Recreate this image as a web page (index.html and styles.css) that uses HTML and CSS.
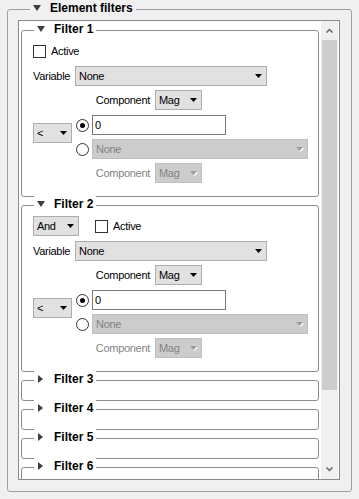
FILE: index.html
```html
<!DOCTYPE html>
<html lang="en">
<head>
  <meta charset="UTF-8">
  <meta name="viewport" content="width=device-width, initial-scale=1.0">
  <title>Element filters</title>
  <link rel="stylesheet" href="styles.css">
</head>
<body>
  <div class="outer">
    <div class="title"><svg width="8" height="6"><path d="M0 0h8L4 6z"/></svg>Element filters</div>
    <div class="scroll">
      <div class="scroll-content">

        <div class="filter">
          <div class="title"><svg width="8" height="6"><path d="M0 0h8L4 6z"/></svg>Filter 1</div>
          <div class="filter-body">
            <div class="row"><label class="check"><span class="box"></span>Active</label></div>
            <div class="row var-row"><span class="lbl">Variable</span><div class="combo w-var"><span>None</span><svg class="arr" width="8" height="5"><path d="M0 0h7L3.5 4z"/></svg></div></div>
            <div class="row comp-row"><span class="lbl-comp">Component</span><div class="combo w-mag"><span>Mag</span><svg class="arr" width="8" height="5"><path d="M0 0h7L3.5 4z"/></svg></div></div>
            <div class="cond">
              <div class="combo w-op op"><span>&lt;</span><svg class="arr" width="8" height="5"><path d="M0 0h7L3.5 4z"/></svg></div>
              <div class="choices">
                <div class="choice"><span class="radio on"></span><div class="edit">0</div></div>
                <div class="choice"><span class="radio"></span><div class="combo dis w-none"><span>None</span><svg class="arr" width="8" height="5"><path class="hl" d="M1 1h7L4.5 5z"/><path d="M0 0h7L3.5 4z"/></svg></div></div>
                <div class="row comp-row dis-lbl"><span class="lbl-comp">Component</span><div class="combo dis w-mag"><span>Mag</span><svg class="arr" width="8" height="5"><path class="hl" d="M1 1h7L4.5 5z"/><path d="M0 0h7L3.5 4z"/></svg></div></div>
              </div>
            </div>
          </div>
        </div>

        <div class="filter">
          <div class="title"><svg width="8" height="6"><path d="M0 0h8L4 6z"/></svg>Filter 2</div>
          <div class="filter-body">
            <div class="row">
              <div class="combo w-and"><span>And</span><svg class="arr" width="8" height="5"><path d="M0 0h7L3.5 4z"/></svg></div>
              <label class="check gap"><span class="box"></span>Active</label>
            </div>
            <div class="row var-row"><span class="lbl">Variable</span><div class="combo w-var"><span>None</span><svg class="arr" width="8" height="5"><path d="M0 0h7L3.5 4z"/></svg></div></div>
            <div class="row comp-row"><span class="lbl-comp">Component</span><div class="combo w-mag"><span>Mag</span><svg class="arr" width="8" height="5"><path d="M0 0h7L3.5 4z"/></svg></div></div>
            <div class="cond">
              <div class="combo w-op op"><span>&lt;</span><svg class="arr" width="8" height="5"><path d="M0 0h7L3.5 4z"/></svg></div>
              <div class="choices">
                <div class="choice"><span class="radio on"></span><div class="edit">0</div></div>
                <div class="choice"><span class="radio"></span><div class="combo dis w-none"><span>None</span><svg class="arr" width="8" height="5"><path class="hl" d="M1 1h7L4.5 5z"/><path d="M0 0h7L3.5 4z"/></svg></div></div>
                <div class="row comp-row dis-lbl"><span class="lbl-comp">Component</span><div class="combo dis w-mag"><span>Mag</span><svg class="arr" width="8" height="5"><path class="hl" d="M1 1h7L4.5 5z"/><path d="M0 0h7L3.5 4z"/></svg></div></div>
              </div>
            </div>
          </div>
        </div>

        <div class="filter closed"><div class="title"><svg width="8" height="8"><path d="M1 0L6 4L1 8z"/></svg>Filter 3</div></div>
        <div class="filter closed"><div class="title"><svg width="8" height="8"><path d="M1 0L6 4L1 8z"/></svg>Filter 4</div></div>
        <div class="filter closed"><div class="title"><svg width="8" height="8"><path d="M1 0L6 4L1 8z"/></svg>Filter 5</div></div>
        <div class="filter closed"><div class="title"><svg width="8" height="8"><path d="M1 0L6 4L1 8z"/></svg>Filter 6</div></div>

      </div>
      <div class="vbar">
        <div class="vbtn"><svg width="7" height="5"><path d="M0.5 4.5L3.5 1.5L6.5 4.5"/></svg></div>
        <div class="thumb"></div>
        <div class="track"></div>
        <div class="vbtn"><svg width="7" height="5"><path d="M0.5 0.5L3.5 3.5L6.5 0.5"/></svg></div>
      </div>
    </div>
  </div>
</body>
</html>
```
FILE: styles.css
```css
body { margin: 0; background: #f0f0f0; color: #000; font: 11px "Liberation Sans", Arial, sans-serif; letter-spacing: -0.3px; }

.outer { margin: 9px 7px 7px; height: 483px; box-sizing: border-box; padding: 0 11px 0 10px; border: 1px solid #a0a0a0; border-radius: 3px; }
.title { display: flex; align-items: center; width: fit-content; height: 15px; margin: -10px 0 0 12px; padding: 0 3px; background: #fff; font-weight: bold; font-size: 12px; letter-spacing: 0; }
.outer > .title { background: #f0f0f0; }
.title svg { margin-right: 9px; fill: #3f3f3f; }

.scroll { display: flex; height: 460px; margin-top: 5px; box-sizing: border-box; border: 1px solid #8a8a8a; background: #fff; }
.scroll-content { flex: 1; overflow: hidden; padding: 1px 2px 0; }

.vbar { display: flex; flex-direction: column; width: 17px; margin-right: 1px; background: #f0f0f0; }
.vbtn { display: flex; align-items: center; justify-content: center; height: 19px; }
.vbtn svg { fill: none; stroke: #606060; stroke-width: 1.5; }
.thumb { height: 350px; margin: 0 1px; background: #cdcdcd; }
.track { flex: 1; }

.filter { margin-top: 8px; border: 1px solid #8c8c8c; border-radius: 3px; }
.filter.closed { padding-bottom: 14px; }
.filter-body { padding: 5px 0 13px 11px; }

.row { display: flex; align-items: center; height: 20px; }
.var-row { margin-top: 5px; }
.comp-row { margin-top: 4px; padding-left: 59px; }
.lbl { width: 42px; }
.lbl-comp { width: 58px; margin-right: 5px; text-align: right; }
.dis-lbl .lbl-comp { color: #838383; }

.check { display: flex; align-items: center; }
.check.gap { margin-left: 16px; }
.box { width: 13px; height: 13px; margin-right: 5px; box-sizing: border-box; border: 1px solid #333; background: #fff; }

.combo { display: flex; align-items: center; justify-content: space-between; height: 20px; padding: 0 3px 0 3px; box-sizing: border-box; border: 1px solid #adadad; background: #e1e1e1; }
.combo .arr { fill: #000; }
.combo .hl { fill: none; }
.combo.dis { border-color: #bfbfbf; background: #ccc; color: #838383; }
.combo.dis .arr { fill: #9a9a9a; }
.combo.dis .hl { fill: #fff; }
.w-var { width: 192px; }
.w-mag { width: 47px; }
.w-op { width: 39px; }
.w-and { width: 46px; }
.w-none { width: 216px; }

.cond { display: flex; align-items: flex-start; margin-top: 5px; }
.op { margin-top: 8px; }
.choices { display: flex; flex-direction: column; gap: 4px; margin-left: 4px; }
.choices .comp-row { margin-top: 0; padding-left: 16px; }
.choice { display: flex; align-items: center; height: 20px; }

.radio { display: flex; align-items: center; justify-content: center; width: 13px; height: 13px; margin-right: 3px; box-sizing: border-box; border: 1px solid #333; border-radius: 50%; background: #fff; }
.radio.on::after { content: ""; width: 5px; height: 5px; border-radius: 50%; background: #000; }

.edit { width: 134px; height: 20px; padding-left: 2px; box-sizing: border-box; border: 1px solid #7a7a7a; background: #fff; line-height: 18px; }
```
